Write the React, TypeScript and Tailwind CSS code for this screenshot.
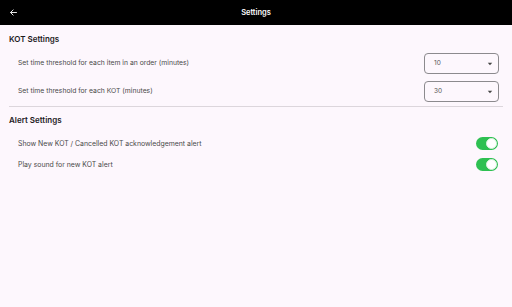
import React from "react";

function Dropdown({ value }: { value: string }) {
  return (
    <div className="w-[75px] h-[21px] border border-[#8c8a8e] rounded-[4px] flex items-center justify-between pl-[9px] pr-[5px] text-[6.5px] text-[#555]">
      <span>{value}</span>
      <svg width="6" height="4" viewBox="0 0 6 4"><path d="M0.8 0.8 L5.2 0.8 L3 3.3 Z" fill="#444" /></svg>
    </div>
  );
}

function Toggle() {
  return (
    <div className="w-[22px] h-[13px] rounded-full bg-[#2ec052] flex items-center justify-end pr-[1px]">
      <div className="w-[11px] h-[11px] rounded-full bg-white border border-[#d8f0dc]" />
    </div>
  );
}

export default function App() {
  return (
    <div className="w-[512px] h-[307px] bg-[#fdf7fd] text-[#222]" style={{ fontFamily: "Inter, 'Open Sans', sans-serif" }}>
      <div className="h-[25px] bg-black grid grid-cols-[1fr_auto_1fr] items-center">
        <div className="pl-[9px] flex items-center">
          <svg width="9" height="9" viewBox="0 0 24 24" fill="none" stroke="white" strokeWidth="2.4" strokeLinecap="round" strokeLinejoin="round">
            <path d="M20 12H5" />
            <path d="M11 5l-7 7 7 7" />
          </svg>
        </div>
        <div className="text-white text-[7.5px] font-semibold">Settings</div>
        <div />
      </div>
      <div className="px-[9px]">
        <div className="h-[28px] flex items-center text-[8px] font-semibold text-[#1d1b1e]">KOT Settings</div>
        <div className="flex flex-col gap-[7px]">
          <div className="h-[21px] flex items-center justify-between pl-[9px] pr-[4px]">
            <span className="text-[6.8px] text-[#4a4a4a]">Set time threshold for each item in an order (minutes)</span>
            <Dropdown value="10" />
          </div>
          <div className="h-[21px] flex items-center justify-between pl-[9px] pr-[4px]">
            <span className="text-[6.8px] text-[#4a4a4a]">Set time threshold for each KOT (minutes)</span>
            <Dropdown value="30" />
          </div>
        </div>
        <div className="mt-[4px] h-px bg-[#dcd6dc]" />
        <div className="h-[26px] flex items-center text-[8px] font-semibold text-[#1d1b1e]">Alert Settings</div>
        <div className="h-[21px] flex items-center justify-between pl-[9px] pr-[5px]">
          <span className="text-[6.9px] text-[#4a4a4a] pt-[2px]">Show New KOT / Cancelled KOT acknowledgement alert</span>
          <Toggle />
        </div>
        <div className="h-[21px] flex items-center justify-between pl-[9px] pr-[5px]">
          <span className="text-[6.9px] text-[#4a4a4a] pt-[2px]">Play sound for new KOT alert</span>
          <Toggle />
        </div>
      </div>
    </div>
  );
}
